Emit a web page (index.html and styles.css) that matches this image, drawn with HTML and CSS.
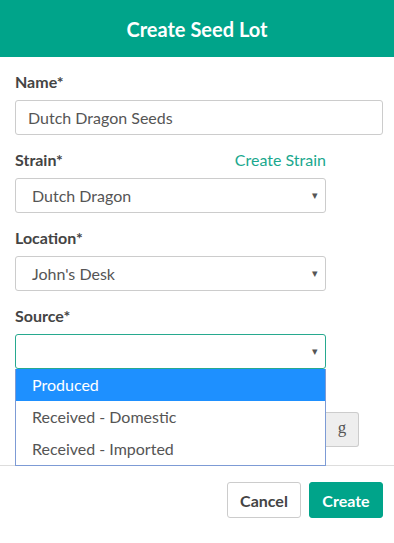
FILE: index.html
```html
<!DOCTYPE html>
<html lang="en">
<head>
    <meta charset="UTF-8">
    <meta name="viewport" content="width=device-width, initial-scale=1.0">
    <title>Create Seed Lot</title>
    <link rel="stylesheet" href="styles.css">
</head>
<body>
    <div class="modal">
        <div class="modal-header">Create Seed Lot</div>

        <form class="modal-body">
            <div class="form-group wide">
                <label class="form-label">Name*</label>
                <div class="form-input">Dutch Dragon Seeds</div>
            </div>

            <div class="form-group">
                <div class="label-row">
                    <label class="form-label">Strain*</label>
                    <a class="form-link">Create Strain</a>
                </div>
                <div class="form-select">Dutch Dragon<span class="caret">▾</span></div>
            </div>

            <div class="form-group">
                <label class="form-label">Location*</label>
                <div class="form-select">John's Desk<span class="caret">▾</span></div>
            </div>

            <div class="form-group source">
                <label class="form-label">Source*</label>
                <div class="form-select open"><span class="caret">▾</span></div>
                <ul class="dropdown">
                    <li class="active">Produced</li>
                    <li>Received - Domestic</li>
                    <li>Received - Imported</li>
                </ul>
            </div>

            <!-- label of this field is covered by the open dropdown -->
            <div class="form-group">
                <div class="label-spacer"></div>
                <div class="input-group">
                    <div class="form-input"></div>
                    <span class="addon">g</span>
                </div>
            </div>
        </form>

        <div class="modal-footer">
            <button type="button" class="btn btn-cancel">Cancel</button>
            <button type="button" class="btn btn-create">Create</button>
        </div>
    </div>
</body>
</html>
```

FILE: styles.css
```css
* {
    margin: 0;
    padding: 0;
    box-sizing: border-box;
}

body {
    font-family: Lato, 'Open Sans', sans-serif;
    background: #fff;
    color: #444;
    width: 394px;
}

.modal-header {
    height: 57px;
    background: #00a48a;
    color: #fff;
    font-size: 20px;
    font-weight: bold;
    display: flex;
    justify-content: center;
    align-items: center;
}

.modal-body {
    padding: 15px 11px 3px 15px;
}

.form-group {
    width: 311px;
    margin-bottom: 15px;
}

.form-group.wide {
    width: 368px;
}

.form-group.source {
    position: relative;
}

.label-row {
    display: flex;
    justify-content: space-between;
}

.form-label {
    display: block;
    font-size: 16px;
    font-weight: bold;
    line-height: 20px;
    margin-bottom: 8px;
    color: #444;
}

.label-spacer {
    height: 28px;
}

.form-link {
    font-size: 16px;
    line-height: 20px;
    color: #1aa88e;
}

.form-input,
.form-select {
    height: 35px;
    border: 1px solid #ccc;
    border-radius: 3px;
    font-size: 16px;
    color: #555;
    display: flex;
    align-items: center;
    padding-left: 12px;
}

.form-select {
    padding-left: 16px;
    position: relative;
}

.form-select.open {
    border-color: #27a98f;
}

.caret {
    position: absolute;
    right: 7px;
    top: 9px;
    font-size: 11px;
    color: #555;
}

.dropdown {
    position: absolute;
    top: 63px;
    left: 0;
    width: 311px;
    list-style: none;
    background: #fff;
    border: 1px solid #7d9bd5;
    border-top: none;
    z-index: 2;
}

.dropdown li {
    height: 32px;
    line-height: 32px;
    padding-left: 16px;
    font-size: 16px;
    color: #555;
}

.dropdown li.active {
    background: #1e90ff;
    color: #fff;
}

.input-group {
    display: flex;
    width: 344px;
}

.input-group .form-input {
    flex: 1;
    border-radius: 3px 0 0 3px;
}

.addon {
    width: 33px;
    height: 35px;
    background: #eee;
    border: 1px solid #ccc;
    border-left: none;
    border-radius: 0 3px 3px 0;
    display: flex;
    justify-content: center;
    align-items: center;
    font-family: 'Liberation Serif', serif;
    font-size: 17px;
    color: #555;
    padding-bottom: 3px;
}

.modal-footer {
    border-top: 1px solid #ddd;
    padding: 16px 11px 10px 15px;
    display: flex;
    justify-content: flex-end;
    gap: 8px;
}

.btn {
    height: 36px;
    border-radius: 3px;
    font-family: Lato, 'Open Sans', sans-serif;
    font-size: 16px;
    font-weight: bold;
    cursor: pointer;
}

.btn-cancel {
    width: 74px;
    background: #fff;
    border: 1px solid #ccc;
    color: #444;
}

.btn-create {
    width: 74px;
    background: #00a48a;
    border: 1px solid #00a48a;
    color: #fff;
}
```
